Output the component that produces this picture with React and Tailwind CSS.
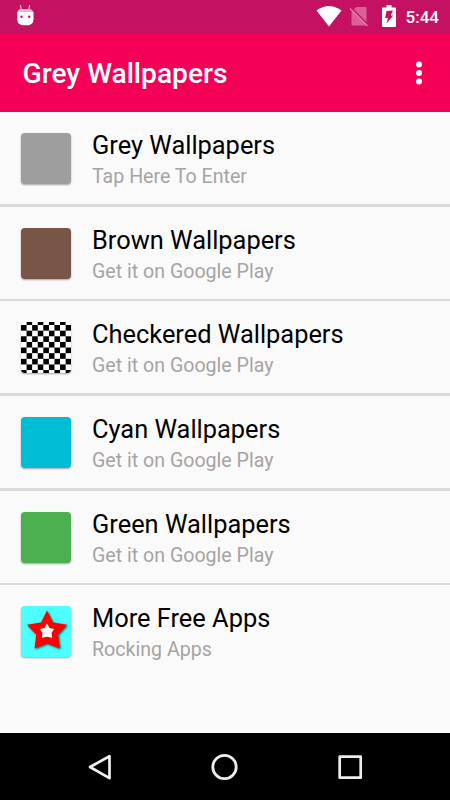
import { clsx } from 'clsx';

const APPS = [
  { title: 'Grey Wallpapers', subtitle: 'Tap Here To Enter', tile: 'bg-[#9e9e9e]' },
  { title: 'Brown Wallpapers', subtitle: 'Get it on Google Play', tile: 'bg-[#795548]' },
  { title: 'Checkered Wallpapers', subtitle: 'Get it on Google Play', tile: 'bg-white', art: 'checker' },
  { title: 'Cyan Wallpapers', subtitle: 'Get it on Google Play', tile: 'bg-[#00bcd4]' },
  { title: 'Green Wallpapers', subtitle: 'Get it on Google Play', tile: 'bg-[#4caf50]' },
  { title: 'More Free Apps', subtitle: 'Rocking Apps', tile: 'bg-[#4dffff]', art: 'star' },
];

function StatusBar() {
  return (
    <div className="flex h-[34px] shrink-0 items-start bg-[#c51162] text-white">
      <svg className="mt-[4px] ml-[16px] h-[23px] w-[19px]" viewBox="0 0 19 23">
        <path d="M4.3 1 L5.2 5 M13.7 1 L12.8 5" stroke="#f3cfdf" strokeWidth="1" />
        <path d="M4 5h10.5q2.5 1 3 3.5H1.2Q1.6 6 4 5z" fill="#f0b5cf" />
        <path d="M1.2 8h16.3v7.5q-.4 5-5 5.7h-6.3q-4.6-.7-5-5.7z" fill="#fff" />
        <circle cx="5.5" cy="12.7" r="1.2" fill="#c51162" />
        <circle cx="13.2" cy="12.7" r="1.2" fill="#c51162" />
      </svg>
      <svg className="mt-[5px] ml-auto h-[22px] w-[26px]" viewBox="0 0 26 22">
        <path d="M.5 5.5Q13-3.500 25.5 5.5L13 21.5z" fill="#fff" />
      </svg>
      <svg className="mt-[6px] ml-[7px] h-[22px] w-[20px]" viewBox="0 0 20 22">
        <path d="M7.500 1h9q1 0 1 1v17.5H3.500q-1 0-1-1V5.500z" fill="#d8619a" />
        <path d="M3 2.500L19 18.500" stroke="#c51162" strokeWidth="1.4" />
        <path d="M1 2.500L18.500 20" stroke="#e07aa8" strokeWidth="1.5" />
      </svg>
      <svg className="mt-[5px] ml-[12.5px] h-[22px] w-[14px]" viewBox="0 0 14 22">
        <path d="M4.500 0h5v2.500H13q1 0 1 1V21q0 1-1 1H1q-1 0-1-1V3.500q0-1 1-1h3.500z" fill="#fff" />
        <path d="M4.500 6L11 5.500L8.800 10.500H11.200L4.500 18.500L6 13H3.200z" fill="#c51162" />
      </svg>
      <span className="mt-[6px] mr-[11px] ml-[10px] text-[17px] leading-[23px] font-medium">5:44</span>
    </div>
  );
}

function AppBar() {
  return (
    <header className="flex h-[78px] shrink-0 items-center justify-between bg-[#f50057] pr-[28px] pl-[22.5px] text-white">
      <h1 className="pt-[2px] text-[28.2px] leading-8 font-medium">Grey Wallpapers</h1>
      <svg className="h-[24px] w-[6px]" viewBox="0 0 6 24">
        <circle cx="3" cy="3.5" r="3" fill="#fff" />
        <circle cx="3" cy="12" r="3" fill="#fff" />
        <circle cx="3" cy="20.5" r="3" fill="#fff" />
      </svg>
    </header>
  );
}

function CheckerArt() {
  return (
    <svg className="h-full w-full" viewBox="0 0 50 51">
      <defs>
        <pattern id="checker" y="-2.6" width="11.16" height="11.26" patternUnits="userSpaceOnUse">
          <rect x="5.58" width="5.58" height="5.63" />
          <rect y="5.63" width="5.58" height="5.63" />
        </pattern>
      </defs>
      <rect width="50" height="51" fill="url(#checker)" />
    </svg>
  );
}

function StarArt() {
  return (
    <svg className="h-full w-full" viewBox="0 0 50 51">
      <path
        className="drop-shadow-[1px_1px_1px_rgba(0,0,0,0.65)]"
        d="M26 4.500L32 16.500L46 18.700L37 28.500L38.800 42.500L26 37.500L13.500 42.500L15.200 28.500L6 18.700L20 16.500Z"
        fill="#ff0000"
      />
      <path d="M26 17.500L28.500 22L33 23L30.500 27L31.200 31.700L26 30.700L20.800 31.700L21.500 27L18.700 23L23.500 22Z" fill="#fff" />
    </svg>
  );
}

function AppRow({ title, subtitle, tile, art }) {
  return (
    <div className="flex h-[92px] items-start pt-[21px] pl-[21px]">
      <div className={clsx('h-[51px] w-[50px] shrink-0 overflow-hidden rounded-[4px] shadow-[0_1px_2px_rgba(0,0,0,0.35)]', tile)}>
        {art === 'checker' && <CheckerArt />}
        {art === 'star' && <StarArt />}
      </div>
      <div className="-mt-[3px] ml-[21px] whitespace-nowrap">
        <div className="mb-[2px] text-[25.4px] leading-[30px] text-black">{title}</div>
        <div className="text-[19.6px] leading-[30px] text-[#a8a3a3]">{subtitle}</div>
      </div>
    </div>
  );
}

function NavBar() {
  return (
    <nav className="flex h-[67px] shrink-0 items-center justify-between bg-black pr-[87px] pl-[87px]">
      <svg className="h-[28px] w-[24px]" viewBox="0 0 24 28" fill="none" stroke="#eee" strokeWidth="2.7" strokeLinejoin="round">
        <path d="M3 14L22.5 3.2V25.2Z" />
      </svg>
      <svg className="h-[28px] w-[28px]" viewBox="0 0 28 28" fill="none" stroke="#eee" strokeWidth="2.8">
        <circle cx="14.5" cy="14" r="11.7" />
      </svg>
      <svg className="h-[28px] w-[26px]" viewBox="0 0 26 28" fill="none" stroke="#eee" strokeWidth="2.7" strokeLinejoin="round">
        <rect x="2.7" y="3.7" width="21" height="21" />
      </svg>
    </nav>
  );
}

export default function App() {
  return (
    <div className="flex h-[800px] w-[450px] flex-col overflow-hidden bg-[#fafafa] font-['Roboto',sans-serif]">
      <StatusBar />
      <AppBar />
      <ul className="flex flex-1 flex-col">
        {APPS.map((app, i) => (
          <li key={app.title}>
            {i > 0 && <div className="h-[2.65px] bg-[#dadada]" />}
            <AppRow {...app} />
          </li>
        ))}
      </ul>
      <NavBar />
    </div>
  );
}
